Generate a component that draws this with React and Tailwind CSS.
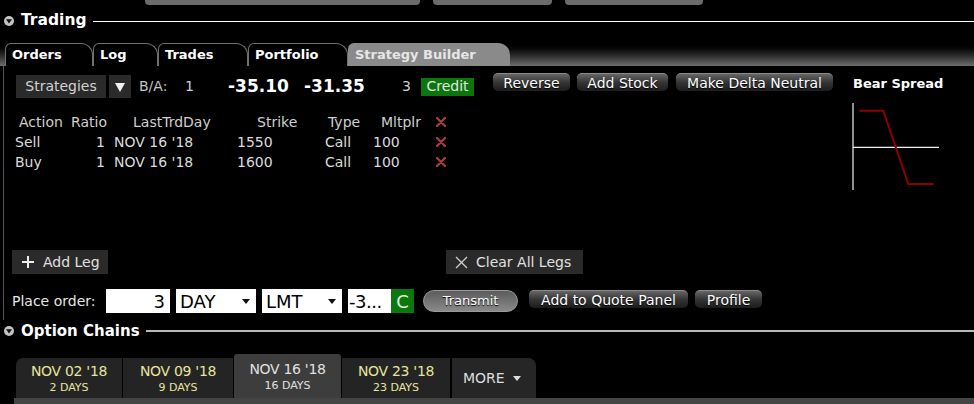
import React from 'react'

const Disclosure = () => (
    <svg width="10" height="10" viewBox="0 0 10 10" className="shrink-0">
        <circle cx="5" cy="5" r="5" fill="#c4c4c4" />
        <path d="M2 3.3 L8 3.3 L5 7.6 Z" fill="#111" />
    </svg>
)

const SectionHeader = ({ title, titleSize, lineClass }) => (
    <div className="flex items-center h-[22px] pl-[4px]">
        <Disclosure />
        <span className={`ml-[7px] font-bold text-white leading-none ${titleSize}`}>{title}</span>
        <div className={`flex-1 ml-[6px] ${lineClass}`} />
    </div>
)

const GlossButton = ({ label, className }) => (
    <div className={`h-[18px] rounded-[5px] border-t border-[#8a8a8a] bg-linear-to-b from-[#666] via-[#353535] to-[#1c1c1c] flex items-center justify-center text-[14px] leading-none text-white [text-shadow:0_1px_1px_#000] ${className}`}>
        {label}
    </div>
)

const RedX = () => (
    <svg width="10" height="10" viewBox="0 0 10 10">
        <path d="M1 1 L9 9 M9 1 L1 9" stroke="#a43e3e" strokeWidth="2.4" strokeLinecap="round" />
    </svg>
)

const SelectArrow = () => (
    <svg width="8" height="5" viewBox="0 0 8 5" className="ml-auto mr-[6px]">
        <path d="M0 0 L8 0 L4 5 Z" fill="#111" />
    </svg>
)

const tabs = [
    { label: 'Orders', w: 'w-[88px]' },
    { label: 'Log', w: 'w-[65px]' },
    { label: 'Trades', w: 'w-[90px]' },
    { label: 'Portfolio', w: 'w-[100px]' },
]

const legs = [
    { action: 'Sell', strike: '1550' },
    { action: 'Buy', strike: '1600' },
]

const chains = [
    { date: "NOV 02 '18", days: '2 DAYS', w: 'w-[106px]', round: 'rounded-tl-[7px]' },
    { date: "NOV 09 '18", days: '9 DAYS', w: 'w-[110px]', round: '' },
    { date: "NOV 16 '18", days: '16 DAYS', w: 'w-[107px]', round: 'rounded-t-[3px]', active: true },
    { date: "NOV 23 '18", days: '23 DAYS', w: 'w-[108px]', round: '' },
]

export default function App() {
    return (
        <div className="w-[974px] h-[404px] bg-black overflow-hidden text-white font-['DejaVu_Sans',sans-serif]">
            {/* stubs of the toolbar above */}
            <div className="flex h-[5px] pl-[145px] gap-[13px]">
                <div className="w-[275px] bg-[#6b6b6b] rounded-b-[4px]" />
                <div className="w-[119px] bg-[#6b6b6b] rounded-b-[4px]" />
                <div className="w-[138px] bg-[#6b6b6b] rounded-b-[4px]" />
            </div>

            <div className="mt-[5px]">
                <SectionHeader title="Trading" titleSize="text-[15.5px]" lineClass="h-px bg-white" />
            </div>

            {/* Tab strip */}
            <div className="mt-[9px] h-[25px] flex items-end pl-[5px] bg-linear-to-b from-black from-[8%] to-[#6e6e6e]">
                {tabs.map((t) => (
                    <div
                        key={t.label}
                        className={`${t.w} h-[23px] bg-black border-t border-l border-r border-[#707070] rounded-tl-[6px] rounded-tr-[12px] pl-[6px] flex items-center text-[13px] font-bold text-white`}
                    >
                        {t.label}
                    </div>
                ))}
                <div className="w-[162px] h-[23px] bg-[#8a8a8a] rounded-tl-[6px] rounded-tr-[12px] pl-[7px] flex items-center text-[13px] font-bold text-[#e6e6e6]">
                    Strategy Builder
                </div>
            </div>

            {/* Strategy builder body */}
            <div className="h-[254px] flex ml-[3px] border-l border-[#555]">
                <div className="w-[846px] flex flex-col">
                    {/* top row */}
                    <div className="mt-[7px] h-[25px] flex items-center text-[14px]">
                        <div className="ml-[12px] w-[90px] h-[23px] self-end bg-[#2a2a2a] flex items-center justify-center text-[#d2d2d2]">Strategies</div>
                        <div className="ml-[3px] w-[22px] h-[23px] self-end bg-[#2a2a2a] flex items-center justify-center">
                            <svg width="10" height="10" viewBox="0 0 10 10"><path d="M0 1 L10 1 L5 10 Z" fill="#f0f0f0" /></svg>
                        </div>
                        <span className="ml-[8px] w-[46px] text-[#c4c4c4] mt-[2px]">B/A:</span>
                        <span className="w-[43px] text-[#d0d0d0] mt-[2px]">1</span>
                        <span className="w-[76px] text-[17px] font-bold mt-[2px]">-35.10</span>
                        <span className="w-[98px] text-[17px] font-bold mt-[2px]">-31.35</span>
                        <span className="w-[19px] text-[#d0d0d0] mt-[2px]">3</span>
                        <div className="w-[53px] h-[18px] mt-[2px] bg-[#0b760b] flex items-center justify-center text-[#e4e4e4]">Credit</div>
                        <GlossButton label="Reverse" className="ml-[19px] w-[77px] self-start" />
                        <GlossButton label="Add Stock" className="ml-[7px] w-[91px] self-start" />
                        <GlossButton label="Make Delta Neutral" className="ml-[8px] w-[157px] self-start" />
                    </div>

                    {/* legs table */}
                    <div className="mt-[14px] text-[14px] text-[#dcdcdc]">
                        <div className="h-[20px] flex items-center pl-[15px] text-[#cfcfcf]">
                            <span className="w-[52px]">Action</span>
                            <span className="w-[62px]">Ratio</span>
                            <span className="w-[124px]">LastTrdDay</span>
                            <span className="w-[71px]">Strike</span>
                            <span className="w-[53px]">Type</span>
                            <span className="w-[55px]">Mltplr</span>
                            <RedX />
                        </div>
                        {legs.map((l) => (
                            <div key={l.action} className="h-[20px] flex items-center pl-[11px]">
                                <span className="w-[56px]">{l.action}</span>
                                <span className="w-[34px] text-right">1</span>
                                <span className="w-[132px] pl-[9px]">NOV 16 '18</span>
                                <span className="w-[88px]">{l.strike}</span>
                                <span className="w-[48px]">Call</span>
                                <span className="w-[63px]">100</span>
                                <RedX />
                            </div>
                        ))}
                    </div>

                    {/* add / clear legs */}
                    <div className="mt-[78px] h-[24px] flex text-[14px] text-[#e0e0e0]">
                        <div className="ml-[8px] w-[96px] bg-[#2a2a2a] flex items-center pl-[10px] gap-[9px]">
                            <svg width="12" height="12" viewBox="0 0 12 12"><path d="M6 0 V12 M0 6 H12" stroke="#eee" strokeWidth="2" /></svg>
                            Add Leg
                        </div>
                        <div className="ml-[338px] w-[137px] bg-[#2a2a2a] flex items-center pl-[9px] gap-[8px]">
                            <svg width="13" height="13" viewBox="0 0 13 13"><path d="M1 1 L12 12 M12 1 L1 12" stroke="#cfcfcf" strokeWidth="1.3" /></svg>
                            Clear All Legs
                        </div>
                    </div>

                    {/* place order */}
                    <div className="mt-[15px] h-[24px] flex items-center text-[14px]">
                        <span className="ml-[8px] w-[94px] text-[#e6e6e6]">Place order:</span>
                        <div className="w-[64px] h-[24px] bg-white text-black text-[18px] flex items-center justify-end pr-[5px]">3</div>
                        <div className="ml-[6px] w-[80px] h-[24px] bg-white text-black text-[18px] flex items-center pl-[4px]">DAY<SelectArrow /></div>
                        <div className="ml-[6px] w-[80px] h-[24px] bg-white text-black text-[18px] flex items-center pl-[4px]">LMT<SelectArrow /></div>
                        <div className="ml-[6px] w-[43px] h-[24px] bg-white text-black text-[18px] flex items-center pl-[1px] tracking-[-0.5px]">-3...</div>
                        <div className="w-[23px] h-[24px] bg-[#0a780a] text-[#e8e8e8] text-[18px] flex items-center justify-center">C</div>
                        <div className="ml-[9px] w-[95px] h-[22px] rounded-full border border-[#9a9a9a] bg-linear-to-b from-[#5c5c5c] to-[#8a8a8a] flex items-center justify-center text-[13px] text-white [text-shadow:0_1px_1px_#000]">
                            Transmit
                        </div>
                        <GlossButton label="Add to Quote Panel" className="ml-[11px] w-[159px] self-start mt-[1px]" />
                        <GlossButton label="Profile" className="ml-[7px] w-[67px] self-start mt-[1px]" />
                    </div>
                </div>

                {/* payoff chart */}
                <div className="flex-1 flex flex-col pt-[10px]">
                    <span className="pl-[3px] h-[16px] leading-[16px] text-[13px] font-bold text-white">Bear Spread</span>
                    <svg width="100" height="95" viewBox="0 0 100 95" className="mt-[8px]">
                        <path d="M3 3 V90" stroke="#f2f2f2" strokeWidth="1.2" />
                        <path d="M3 47.3 H89" stroke="#f2f2f2" strokeWidth="1.2" />
                        <polyline points="9.3,10.7 33.3,10.7 58.3,84 83.3,84" fill="none" stroke="#8c0000" strokeWidth="2" />
                    </svg>
                </div>
            </div>

            <SectionHeader title="Option Chains" titleSize="text-[15px]" lineClass="h-[2px] bg-[#b8b8b8]" />

            {/* expiry tabs */}
            <div className="h-[56px] flex items-end pl-[16px] gap-[1px]">
                {chains.map((c) => (
                    <div
                        key={c.date}
                        className={`${c.w} ${c.round} flex flex-col items-center justify-center pt-[2px] ${c.active ? 'h-[44px] bg-[#3d3d3d] text-[#e0e0e0]' : 'h-[40px] bg-[#242424] text-[#e8e49c]'}`}
                    >
                        <span className="text-[14px] leading-[17px] tracking-[-0.3px]">{c.date}</span>
                        <span className="text-[11px] leading-[15px]">{c.days}</span>
                    </div>
                ))}
                <div className="ml-[1px] w-[84px] h-[40px] bg-[#262626] rounded-tr-[8px] flex items-center pl-[11px] gap-[8px] text-[14px] text-[#dedede]">
                    MORE
                    <svg width="8" height="5" viewBox="0 0 8 5"><path d="M0 0 L8 0 L4 5 Z" fill="#dedede" /></svg>
                </div>
            </div>
            <div className="ml-[14px] h-[6px] bg-[#444]" />
        </div>
    )
}
